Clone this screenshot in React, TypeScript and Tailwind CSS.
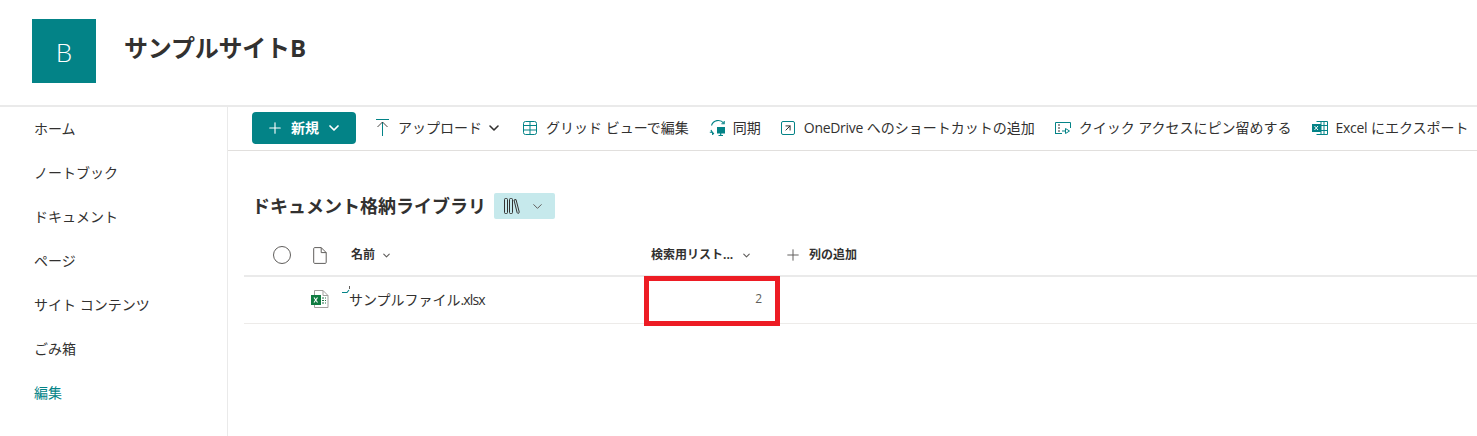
import React from 'react';
import { ChevronDown, Plus, ArrowUpRight } from 'lucide-react';

const FONT = "font-['Open_Sans','Noto_Sans_CJK_JP',sans-serif]";

const navItems = ['ホーム', 'ノートブック', 'ドキュメント', 'ページ', 'サイト コンテンツ', 'ごみ箱'];

function UploadIcon() {
  return (
    <svg width="14" height="17" viewBox="0 0 14 17" fill="none" className="shrink-0">
      <path d="M0 .5h13" stroke="#038387" />
      <path d="M6.500 3v14" stroke="#038387" />
      <path d="M1.500 8l5-5 5 5" stroke="#323130" strokeWidth="0.9" />
    </svg>
  );
}

function GridIcon() {
  return (
    <svg width="15" height="14" viewBox="0 0 15 14" fill="none" className="shrink-0">
      <rect x=".5" y=".5" width="13" height="13" rx="2" stroke="#038387" />
      <path d="M.5 4.500h13M.5 9h13M7 .5v13" stroke="#038387" />
    </svg>
  );
}

function SyncIcon() {
  return (
    <svg width="18" height="18" viewBox="0 0 18 18" fill="none" className="shrink-0 -mr-[2px]">
      <path d="M2.500 6.500a7 7 0 0 1 12.200-2.300" stroke="#038387" strokeWidth="1.100" />
      <path d="M15.200 2v2.800h-2.800" stroke="#038387" strokeWidth="1.100" />
      <path d="M2 11a7 7 0 0 0 3 4" stroke="#038387" strokeWidth="1.100" />
      <path d="M.8 13.200h2.800V16" stroke="#038387" strokeWidth="1.100" />
      <rect x="8" y="8" width="8" height="6.500" fill="#038387" />
      <path d="M9.500 16.500h4.500M11.700 14v2.500" stroke="#038387" strokeWidth="1.200" />
    </svg>
  );
}

function ShortcutIcon() {
  return (
    <div className="w-[14px] h-[14px] mr-[1px] border border-[#038387] rounded-[2px] flex items-center justify-center shrink-0">
      <ArrowUpRight size={10} strokeWidth={2.4} color="#323130" />
    </div>
  );
}

function PinIcon() {
  return (
    <svg width="16" height="12" viewBox="0 0 16 12" fill="none" className="shrink-0">
      <path d="M.5 12V.5h15V6" stroke="#038387" />
      <path d="M.5 11.500H7" stroke="#038387" />
      <path d="M3 3h2M3 6h2M3 9h2" stroke="#323130" />
      <path d="M10.500 6.500v5l4-2.500z" stroke="#038387" />
      <path d="M7 9h3.500" stroke="#038387" />
    </svg>
  );
}

function ExcelExportIcon() {
  return (
    <svg width="16" height="14" viewBox="0 0 16 14" fill="none" className="shrink-0">
      <path d="M4.500.5h11v13h-11" stroke="#038387" />
      <path d="M9 .5v13M4.500 4.500h11M4.500 9.500h11M12 .5v13" stroke="#038387" />
      <rect x="0" y="3" width="9" height="8" fill="#038387" />
      <path d="M2.500 5l3.500 4M6 5L2.500 9" stroke="#fff" strokeWidth="1" />
    </svg>
  );
}

function ViewIcon() {
  return (
    <svg width="16" height="16" viewBox="0 0 16 16" fill="none">
      <rect x=".5" y=".5" width="3" height="15" rx="1" stroke="#323130" />
      <rect x="5.500" y=".5" width="3" height="15" rx="1" stroke="#323130" />
      <path d="M10 2l2-.5 3.200 12.400c.1.7-.2 1.200-.8 1.400-.6.1-1.100-.1-1.300-.8z" stroke="#323130" />
    </svg>
  );
}

function FileIcon() {
  return (
    <svg width="14" height="17" viewBox="0 0 14 17" fill="none">
      <path d="M.7 1.600C.7 1 1.100.6 1.700.6h6.500l5 5v9.800c0 .6-.4 1-1 1H1.700c-.6 0-1-.4-1-1z" stroke="#605e5c" />
      <path d="M8.200.6v5h5" stroke="#605e5c" />
    </svg>
  );
}

function XlsxIcon() {
  return (
    <svg width="18" height="18" viewBox="0 0 18 18" fill="none">
      <path d="M3.500.5h8.500l5 5v12H3.500z" fill="#fff" stroke="#a19f9d" />
      <path d="M12 .5v5h5" stroke="#a19f9d" />
      <path d="M11 8h4M11 10.500h4M11 13h4" stroke="#217346" strokeDasharray="2 1" />
      <rect x="0" y="5" width="10" height="10" fill="#107c41" />
      <path d="M3 7.500l3.500 5M6.500 7.500L3 12.500" stroke="#fff" strokeWidth="1.100" />
    </svg>
  );
}

function CommandItem({ icon, label, chevron }: { icon: React.ReactNode; label: React.ReactNode; chevron?: boolean }) {
  return (
    <div className="flex items-center gap-[8px] whitespace-nowrap">
      {icon}
      <span className="text-[14px] text-[#323130]">{label}</span>
      {chevron && <ChevronDown size={16} color="#323130" strokeWidth={2.4} className="-ml-[4px] mr-[1px]" />}
    </div>
  );
}

export default function App() {
  return (
    <div className={`w-[1477px] h-[436px] overflow-hidden bg-white ${FONT}`}>
      {/* Site header */}
      <header className="h-[107px] pl-[32px] pt-[19px] flex items-start gap-[28px] border-b-2 border-[#eaeaea]">
        <div className="w-[64px] h-[64px] bg-[#038387] flex items-center justify-center text-white text-[26px] font-light font-['Lato'] pt-[2px]">
          B
        </div>
        <h1 className="text-[24px] font-bold text-[#323130] leading-[58px] whitespace-nowrap tracking-[-0.2px]">サンプルサイトB</h1>
      </header>

      <div className="flex h-[329px]">
        {/* Left nav */}
        <nav className="w-[228px] shrink-0 border-r border-[#eaeaea] pl-[34px] flex flex-col">
          {navItems.map((item) => (
            <div key={item} className="h-[44px] flex items-center pb-[2px] text-[14px] text-[#323130]">
              {item}
            </div>
          ))}
          <div className="h-[44px] flex items-center pb-[2px] text-[14px] text-[#038387]">編集</div>
        </nav>

        <main className="flex-1 min-w-0">
          {/* Command bar */}
          <div className="h-[44px] pb-[2px] border-b border-[#e1dfdd] pl-[24px] flex items-center gap-[20px] overflow-hidden">
            <div className="w-[104px] h-[32px] shrink-0 bg-[#038387] rounded-[4px] flex items-center justify-center gap-[7px] text-white text-[14px] font-semibold">
              <Plus size={18} strokeWidth={1.500} />
              <span>新規</span>
              <ChevronDown size={16} strokeWidth={2.600} />
            </div>
            <CommandItem icon={<UploadIcon />} label="アップロード" chevron />
            <CommandItem icon={<GridIcon />} label="グリッド ビューで編集" />
            <CommandItem icon={<SyncIcon />} label="同期" />
            <CommandItem
              icon={<ShortcutIcon />}
              label={<><span className="tracking-[-0.3px]">OneDrive</span> へのショートカットの追加</>}
            />
            <CommandItem icon={<PinIcon />} label="クイック アクセスにピン留めする" />
            <CommandItem
              icon={<ExcelExportIcon />}
              label={<><span className="tracking-[-0.3px]">Excel</span> にエクスポート</>}
            />
          </div>

          {/* Library title */}
          <div className="pl-[24px] mt-[42px] h-[26px] flex items-center gap-[8px]">
            <h2 className="text-[18px] font-bold text-[#323130] whitespace-nowrap">ドキュメント格納ライブラリ</h2>
            <div className="w-[61px] h-[26px] bg-[#c6e9ec] rounded-[2px] flex items-center pl-[10px] gap-[10px]">
              <ViewIcon />
              <ChevronDown size={15} color="#605e5c" strokeWidth={1.600} />
            </div>
          </div>

          {/* List */}
          <div className="ml-[16px] mt-[16px] relative">
            <div className="h-[42px] border-b-2 border-[#eaeaea] flex items-center text-[12px] font-bold text-[#323130]">
              <div className="w-[18px] h-[18px] ml-[29px] rounded-full border border-[#605e5c] shrink-0" />
              <div className="ml-[22px] w-[16px] shrink-0"><FileIcon /></div>
              <div className="ml-[22px] w-[300px] flex items-center gap-[6px] shrink-0">
                <span>名前</span>
                <ChevronDown size={11} color="#605e5c" strokeWidth={2.400} />
              </div>
              <div className="w-[133px] flex items-center gap-[8px] shrink-0">
                <span className="whitespace-nowrap">検索用リスト...</span>
                <ChevronDown size={11} color="#605e5c" strokeWidth={2.400} />
              </div>
              <div className="flex items-center gap-[7px]">
                <Plus size={18} color="#605e5c" strokeWidth={1.300} />
                <span>列の追加</span>
              </div>
            </div>
            <div className="h-[47px] pb-[2px] border-b border-[#edebe9] flex items-center">
              <div className="ml-[67px] w-[38px] shrink-0"><XlsxIcon /></div>
              <div className="relative w-[297px] text-[14px] text-[#323130] shrink-0 whitespace-nowrap">
                サンプルファイル<span className="tracking-[-0.9px]">.xlsx</span>
                <svg width="12" height="10" viewBox="0 0 12 10" fill="none" className="absolute -left-[8px] -top-[3px]">
                  <path d="M1 6.500h5l2-2.500" stroke="#038387" strokeWidth="1.100" />
                  <path d="M8.500 0v3" stroke="#605e5c" strokeWidth="1" />
                </svg>
              </div>
              <div className="w-[116px] text-right text-[12px] text-[#605e5c] shrink-0">2</div>
            </div>
            {/* Red annotation box */}
            <div className="absolute left-[400px] top-[41px] w-[136px] h-[50px] border-[5px] border-[#ed1c24]" />
          </div>
        </main>
      </div>
    </div>
  );
}
